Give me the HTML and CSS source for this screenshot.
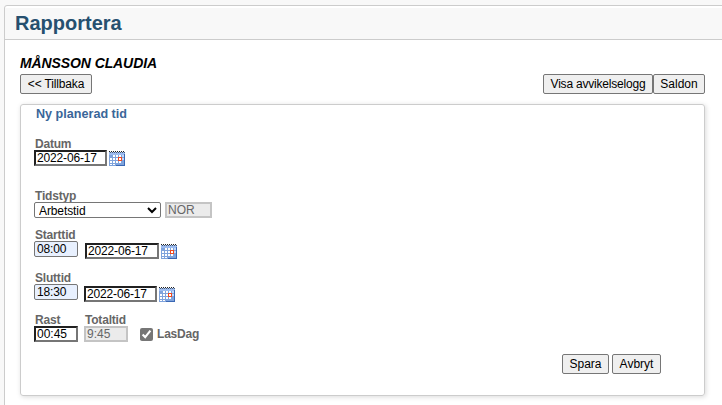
FILE: index.html
```
<!DOCTYPE html>
<html lang="sv">
<head>
    <meta charset="UTF-8">
    <meta name="viewport" content="width=device-width, initial-scale=1.0">
    <title>Rapportera</title>
    <link rel="stylesheet" href="styles.css">
</head>
<body>
    <svg class="defs" width="0" height="0">
        <symbol id="calendar" viewBox="0 0 16 15">
            <rect x="0" y="1" width="16" height="14" fill="#7fa3dc"/>
            <rect x="0" y="1" width="16" height="3" fill="#9dbcf0"/>
            <path d="M0 .5h16" stroke="#222" stroke-dasharray="1 1"/>
            <path d="M1 1.5h15" stroke="#4a5a70" stroke-dasharray="1 1"/>
            <path d="M4 4h2v2h-2zM7 4h2v2h-2zM10 4h2v2h-2zM1 7h2v2h-2zM4 7h2v2h-2zM7 7h2v2h-2zM1 10h2v2h-2zM4 10h2v2h-2zM7 10h2v2h-2zM10 10h2v2h-2zM1 13h2v1h-2zM4 13h2v1h-2z" fill="#fff"/>
            <path d="M13 4h2v2h-2zM13 7h2v2h-2z" fill="#c3d8fa"/>
            <path d="M15.500 3v12M7 14.500h9" stroke="#3a68b4"/>
            <rect x="9.500" y="6.500" width="3" height="3" fill="#fff" stroke="#f04a20"/>
        </symbol>
    </svg>

    <div class="panel">
        <h1>Rapportera</h1>
        <div class="content">
            <div class="name">MÅNSSON CLAUDIA</div>
            <div class="toolbar">
                <button class="btn-back">&lt;&lt; Tillbaka</button>
                <div class="toolbar-right">
                    <button class="btn-log">Visa avvikelselogg</button>
                    <button class="btn-saldo">Saldon</button>
                </div>
            </div>

            <form class="box">
                <h2>Ny planerad tid</h2>

                <div class="field datum">
                    <label for="datum">Datum</label>
                    <div class="row">
                        <input class="date" id="datum" type="text" value="2022-06-17">
                        <svg class="cal"><use href="#calendar"/></svg>
                    </div>
                </div>

                <div class="field tidstyp">
                    <label for="tidstyp">Tidstyp</label>
                    <div class="row">
                        <select id="tidstyp">
                            <option>Arbetstid</option>
                        </select>
                        <input class="code" type="text" value="NOR" disabled>
                    </div>
                </div>

                <div class="field start">
                    <label for="start">Starttid</label>
                    <div class="row">
                        <input class="time filled" id="start" type="text" value="08:00">
                        <input class="date" type="text" value="2022-06-17">
                        <svg class="cal"><use href="#calendar"/></svg>
                    </div>
                </div>

                <div class="field slut">
                    <label for="slut">Sluttid</label>
                    <div class="row">
                        <input class="time filled" id="slut" type="text" value="18:30">
                        <input class="date" type="text" value="2022-06-17">
                        <svg class="cal"><use href="#calendar"/></svg>
                    </div>
                </div>

                <div class="sums">
                    <div class="field">
                        <label for="rast">Rast</label>
                        <input class="time" id="rast" type="text" value="00:45">
                    </div>
                    <div class="field">
                        <label for="total">Totaltid</label>
                        <input class="time" id="total" type="text" value="9:45" disabled>
                    </div>
                    <div class="check">
                        <input id="lasdag" type="checkbox" checked>
                        <label for="lasdag">LasDag</label>
                    </div>
                </div>

                <div class="actions">
                    <button class="btn-save" type="button">Spara</button>
                    <button class="btn-cancel" type="button">Avbryt</button>
                </div>
            </form>
        </div>
    </div>
</body>
</html>
```

FILE: styles.css
```
* {
    box-sizing: border-box;
}
body {
    margin: 0;
    padding: 5px 0 0 4px;
    height: 405px;
    overflow: hidden;
    background-color: #f8f8f8;
    font-family: "Liberation Sans", Arial, sans-serif;
    font-size: 12px;
}
.defs {
    position: absolute;
}
.panel {
    width: 740px;
    height: 420px;
    border: 1px solid #ccc;
    border-radius: 3px;
    background-color: #fff;
}
h1 {
    margin: 2px 0 0;
    padding-left: 10px;
    height: 32px;
    line-height: 31px;
    font-size: 20px;
    color: #26506f;
    background-color: #f8f8f8;
    border-bottom: 1px solid #ccc;
}
.content {
    width: 700px;
    padding: 15px 0 0 15px;
}
.name {
    height: 19px;
    line-height: 16px;
    font-size: 14px;
    font-weight: bold;
    font-style: italic;
    letter-spacing: -0.1px;
}
.toolbar {
    display: flex;
    justify-content: space-between;
}
.toolbar-right {
    display: flex;
}
button {
    height: 20px;
    padding: 0;
    border: 1px solid #767676;
    border-radius: 2px;
    background-color: #efefef;
    font-family: inherit;
    font-size: 12px;
    line-height: 18px;
    color: #000;
}
.btn-back {
    width: 72px;
    letter-spacing: -0.15px;
}
.btn-log {
    width: 110px;
    letter-spacing: -0.2px;
}
.btn-saldo {
    width: 52px;
}
.box {
    height: 292px;
    margin-top: 10px;
    padding-left: 13px;
    border: 1px solid #ccc;
    border-radius: 3px;
    box-shadow: 1px 1px 5px rgba(0, 0, 0, 0.15);
}
h2 {
    margin: 0 0 0 2px;
    height: 33px;
    line-height: 18px;
    font-size: 12.6px;
    color: #3a6699;
}
label {
    display: block;
    height: 12px;
    line-height: 12px;
    padding-left: 1px;
    font-weight: bold;
    letter-spacing: -0.2px;
    color: #666;
}
.row {
    display: flex;
}
input, select {
    height: 16px;
    margin: 0;
    padding: 0 0 0 1px;
    font-family: inherit;
    font-size: 12px;
    color: #000;
}
input[type=text] {
    border: 2px inset #767676;
    line-height: 12px;
}
input[type=text]:disabled {
    border: 2px solid #c4c4c4;
    background-color: #ebebeb;
    color: #666;
}
input.filled {
    border: 1px solid #767676;
    border-radius: 2px;
    padding-left: 2px;
    background-color: #e8f0fe;
}
input.filled, input.date {
    letter-spacing: -0.15px;
}
.date {
    width: 73px;
}
.time {
    width: 44px;
}
.code {
    width: 47px;
    margin-left: 4px;
}
select {
    width: 127px;
    padding: 0 0 1px;
    border: 1px solid #767676;
    border-radius: 2px;
    background-color: #fff;
    letter-spacing: -0.1px;
}
.cal {
    width: 16px;
    height: 15px;
    margin: 1px 0 0 2px;
}
.datum {
    height: 52px;
}
.tidstyp {
    height: 39px;
}
.start {
    height: 43px;
}
.slut {
    height: 42px;
}
.start .date {
    margin: 2px 0 0 7px;
    width: 74px;
}
.slut .date {
    margin: 2px 0 0 6px;
}
.start .cal, .slut .cal {
    margin-top: 3px;
}
.sums {
    display: flex;
    gap: 6px;
}
.check {
    display: flex;
    padding: 14px 0 0 6px;
}
.check input {
    width: 13px;
    height: 13px;
    accent-color: #767676;
}
.check label {
    padding-left: 4px;
}
.actions {
    display: flex;
    gap: 3px;
    margin: 12px 0 0 528px;
}
.btn-save {
    width: 47px;
}
.btn-cancel {
    width: 49px;
}
```
